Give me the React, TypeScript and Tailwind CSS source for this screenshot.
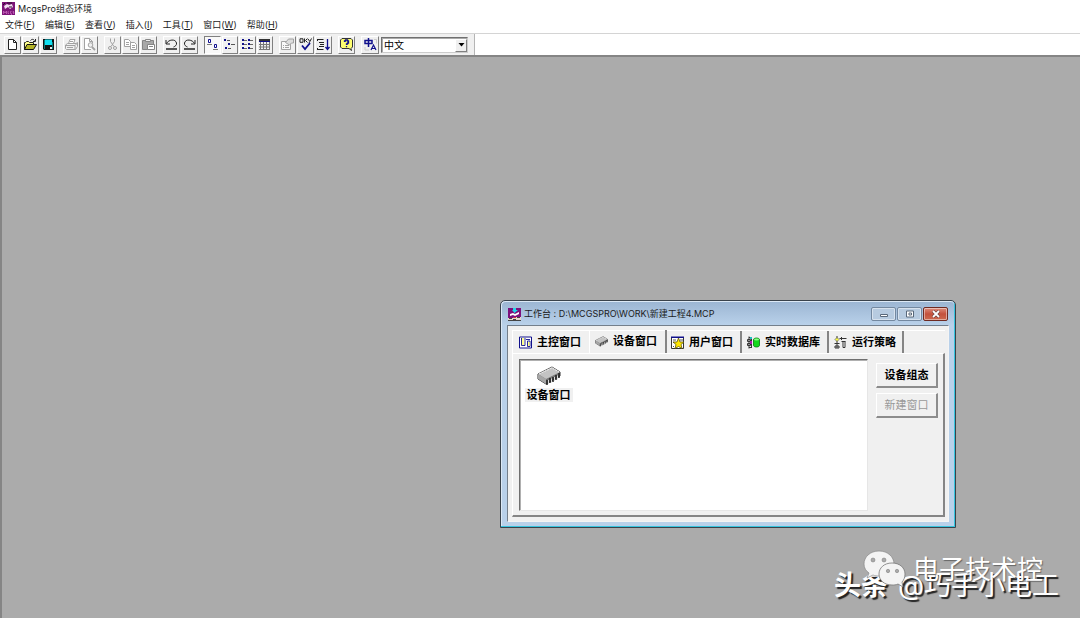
import React from "react";

type Kids = { children: React.ReactNode };

function Glyph({ children, className = "h-[13px] w-[13px]" }: Kids & { className?: string }) {
  return (
    <svg viewBox="0 0 13 13" className={`${className} shrink-0`} fill="none" aria-hidden="true">
      {children}
    </svg>
  );
}

const GRAY = "#a2a2a2";
const NAVY = "#10108c";

const NewIcon = (
  <Glyph>
    <path d="M2.500 1.500h5l3 3v7h-8z" fill="#fff" stroke="#222" />
    <path d="M7.500 1.500v3h3" stroke="#222" />
  </Glyph>
);
const OpenIcon = (
  <Glyph>
    <path d="M.5 11.500v-7h1l1-1h2l1 1h4v2" fill="#ffff8c" stroke="#222" />
    <path d="M.5 11.500l2.500-5h9.500l-3 5z" fill="#b4b428" stroke="#111" />
    <path d="M6.500 2.500c1-1.500 3-1.500 4 0M11.500 1v2.500H9" stroke="#222" />
  </Glyph>
);
const SaveIcon = (
  <Glyph>
    <path d="M1 1h11v11H2l-1-1z" fill="#111" />
    <path d="M2 2h1v9H2zM10 4h1v7h-1z" fill="#087878" />
    <path d="M3 1.500h7V7H3z" fill="#10dff0" />
    <path d="M8 9h2v2H8z" fill="#eee" />
  </Glyph>
);
const PrintIcon = (
  <Glyph>
    <path d="M3.500 5.500l1.500-4h5l-1.500 4" fill="#fff" stroke={GRAY} />
    <path d="M5 3.500h3M.5 7l2-1.500h8.500l1.500-1v4l-2 3h-9l-1-1zM.5 7.500h9.500l2.500-2.500M10 7.500v4M2 9.500h6" stroke={GRAY} />
  </Glyph>
);
const PreviewIcon = (
  <Glyph>
    <path d="M8 11.500H1.500V.5h5l3 3v2M6.500.5v3h3" fill="#fff" stroke={GRAY} />
    <circle cx="7.500" cy="7" r="2.300" fill="#eee" stroke={GRAY} />
    <path d="M9 9l3 3" stroke={GRAY} strokeWidth="1.800" />
  </Glyph>
);
const CutIcon = (
  <Glyph>
    <path d="M4.500.5v3l3.500 5M8.500.5v3l-3.500 5" stroke={GRAY} />
    <circle cx="4" cy="10" r="1.500" stroke={GRAY} />
    <circle cx="9" cy="10" r="1.500" stroke={GRAY} />
  </Glyph>
);
const CopyIcon = (
  <Glyph>
    <path d="M.5 1.500h4l2 2v5h-6zM2 4.500h3M2 6.500h3" fill="#fff" stroke={GRAY} />
    <path d="M6.500 4.500h4l2 2v5h-6zM8 7.500h3M8 9.500h3" fill="#fff" stroke={GRAY} />
  </Glyph>
);
const PasteIcon = (
  <Glyph>
    <path d="M.5 2.500h11v9H.5z" fill="#a8a8a8" stroke="#858585" />
    <path d="M3.500 1.500h5v2h-5z" fill="#eee" stroke="#888" />
    <path d="M5.500 6.500h7v5h-7zM7 8.500h4" fill="#fff" stroke="#858585" />
  </Glyph>
);
const UndoIcon = (
  <Glyph>
    <path d="M1 2v4h4M1.500 5.500C3.500 1.500 10.500.5 11.500 5c.5 2-1.500 3.500-3 4" stroke="#222" />
    <path d="M1 11h11" stroke="#222" strokeWidth="1.500" />
  </Glyph>
);
const RedoIcon = (
  <Glyph>
    <path d="M12 2v4H8M11.500 5.500C9.500 1.500 2.500.5 1.500 5c-.5 2 1.500 3.500 3 4" stroke="#222" />
    <path d="M1 11h11" stroke="#222" strokeWidth="1.500" />
  </Glyph>
);
const LargeIcon = (
  <Glyph>
    <path d="M2.500 1.500h2v3h-2zM8.500 6.500h2v3h-2z" fill="#fff" stroke={NAVY} />
    <path d="M1 6.500h5M7 11.500h5" stroke="#777" />
  </Glyph>
);
const SmallIcon = (
  <Glyph>
    <path d="M1 1h2v2H1zM5 5h2v2H5zM2 9h2v2H2z" fill={NAVY} />
    <path d="M4 2.500h3M8 6.500h4M5 10.500h3" stroke="#555" />
  </Glyph>
);
const ListIcon = (
  <Glyph>
    <path d="M1 1h2v2H1zM7 1h2v2H7zM1 5h2v2H1zM7 5h2v2H7zM1 9h2v2H1zM7 9h2v2H7z" fill={NAVY} />
    <path d="M3 2.500h3M9 2.500h3M3 6.500h3M9 6.500h3M3 10.500h3M9 10.500h3" stroke="#666" />
  </Glyph>
);
const DetailIcon = (
  <Glyph>
    <path d="M1 1h11v2H1z" fill="#333" />
    <path d="M1 3.500h11" stroke={NAVY} />
    <path d="M2.500 4v8M5.500 4v8M8.500 4v8M11.500 4v8M1 6.500h11M1 9h11M1 11.500h11" stroke="#777" />
  </Glyph>
);
const PropIcon = (
  <Glyph>
    <path d="M.5 3.500h9v8h-9zM2 7.500h1M4 7.500h4M2 9.500h1M4 9.500h4" fill="#f8f8f8" stroke={GRAY} />
    <path d="M4.500 4.500l3-3.500h5v4h-2l-2 2z" fill="#ddd" stroke={GRAY} />
  </Glyph>
);
const CheckIcon = (
  <Glyph>
    <path d="M1 .8h3v3.500H1zM5.500.5v4M8.500.5l-2 2 2 2M9 1l1.500 2M10 5l2.500-4.500" stroke="#222" />
    <path d="M3 7.500l3 3.500 5-6" stroke={NAVY} strokeWidth="1.800" />
  </Glyph>
);
const SortIcon = (
  <Glyph>
    <path d="M.5 1.500h6M2 4.500h5M3 6.500h4M2 8.500h5M.5 11.500h6M.5 1v2M.5 10v2" stroke="#222" />
    <path d="M10.500 1v10M8.500 9l2 2.500 2-2.500" stroke={NAVY} strokeWidth="1.300" />
  </Glyph>
);
const HelpIcon = (
  <Glyph>
    <path d="M2 .5h9l1.500 1.500v7L11 10.500l.5 2-2.500-2H2L.5 9V2z" fill="#ffff70" stroke="#333" />
    <path d="M4.500 4V3h1V2h2v1h1v2h-1v1h-1v1M6.500 8v1.300" stroke={NAVY} strokeWidth="1.300" />
  </Glyph>
);
const LangIcon = (
  <Glyph>
    <path d="M1 2.500h7v3H1zM4.500 0v9" stroke={NAVY} strokeWidth="1.500" />
    <path d="M10 1.500h2.500v4M1 9v3h4" stroke="#ccc" />
    <path d="M7 12l2.500-5 2.500 5M8 10.500h3" stroke={NAVY} strokeWidth="1.200" />
  </Glyph>
);

type Tool = { label: string; icon: React.ReactNode; off?: boolean; pressed?: boolean };
const groups: { width: string; tools: Tool[] }[] = [
  { width: "w-[53px]", tools: [{ label: "新建", icon: NewIcon }, { label: "打开", icon: OpenIcon }, { label: "保存", icon: SaveIcon }] },
  { width: "w-[35px]", tools: [{ label: "打印", icon: PrintIcon, off: true }, { label: "打印预览", icon: PreviewIcon, off: true }] },
  { width: "w-[53px]", tools: [{ label: "剪切", icon: CutIcon, off: true }, { label: "复制", icon: CopyIcon, off: true }, { label: "粘贴", icon: PasteIcon, off: true }] },
  { width: "w-[35px]", tools: [{ label: "撤销", icon: UndoIcon }, { label: "重做", icon: RedoIcon }] },
  { width: "w-[69px]", tools: [{ label: "大图标", icon: LargeIcon, pressed: true }, { label: "小图标", icon: SmallIcon }, { label: "列表", icon: ListIcon }, { label: "详细资料", icon: DetailIcon }] },
  { width: "w-[53px]", tools: [{ label: "属性", icon: PropIcon, off: true }, { label: "检查", icon: CheckIcon }, { label: "排序", icon: SortIcon }] },
  { width: "w-[17px]", tools: [{ label: "帮助", icon: HelpIcon }] },
  { width: "w-[18px]", tools: [{ label: "语言", icon: LangIcon }] },
];

const menus = [
  ["文件", "F"],
  ["编辑", "E"],
  ["查看", "V"],
  ["插入", "I"],
  ["工具", "T"],
  ["窗口", "W"],
  ["帮助", "H"],
];

function AppLogo() {
  return (
    <Glyph>
      <path d="M0 0h13v13H0z" fill="#7c1478" />
      <path d="M2 4l3-2 2 1 3-1 1 3-3 2-2-2-3 2z" fill="#f2dff0" />
      <path d="M1 3l2-2M5 1h5M7 5h3" stroke="#2a0a2c" />
      <path d="M1.500 12V9l1.500 2 1.500-2v3M6.500 9.500H6v2h1M9.500 9.500h-1v2h1V13M12 9.500h-1v1h1v1h-1" stroke="#c766bd" strokeWidth=".8" />
    </Glyph>
  );
}

function WorkbenchLogo() {
  return (
    <Glyph>
      <path d="M0 0h13v13H0z" fill="#7c107c" />
      <path d="M5 0h3v2h2L6.500 5 4 2h1z" fill="#20d8e8" />
      <path d="M2 6l3-1 2 1 4-2v2l-4 2-2-1-3 1z" fill="#fff" />
      <path d="M0 10h5l2-1h6v3H0z" fill="#e6d7ca" />
      <path d="M1 10.500h3M5 11.500h3M9 9.500h3M0 12.500h13" stroke="#444" />
      <path d="M6 9h2v1H6z" fill="#e03030" />
    </Glyph>
  );
}

function Chip({ className }: { className: string }) {
  return (
    <svg viewBox="0 0 24 20" className={className} fill="none" aria-hidden="true">
      <path d="M1 8L15 1l8 5v4L9 18l-8-5z" fill="#777" stroke="#333" />
      <path d="M1 8L15 1l8 5L9 13z" fill="#c3c3c3" />
      <path d="M1 8l8 5v5l-8-5z" fill="#a6a6a6" />
      <path d="M2 8l13-6 7 4" stroke="#eee" strokeDasharray="2 1" />
      <path d="M10 14v5M13 12v5M16 11v5M19 9v5M22 7v5" stroke="#222" strokeWidth="1.500" />
      <path d="M11.500 14v4M14.500 12.500v4M17.500 11v4M20.500 9.500v4" stroke="#ddd" />
    </svg>
  );
}

const MainTabIcon = (
  <Glyph>
    <path d="M.5 1h12v11H.5z" fill="#fff" stroke={NAVY} />
    <path d="M2 2h3v7H2z" fill="#ffff90" />
    <path d="M2.500 2v7.500h3.500v-7.500M7 3.500h4M8.500 5v5.500h2.500V5z" stroke={NAVY} strokeWidth=".9" />
    <path d="M9 6h1.500v4H9z" fill="#ffff80" />
  </Glyph>
);
const UserTabIcon = (
  <Glyph>
    <path d="M.5 1.500h12v11H.5z" fill="#fff" stroke="#333" />
    <path d="M0 .5h13V2H0z" fill={NAVY} />
    <path d="M2 4h3M9 4h3M2 6l1 1M2 10l1 1" stroke="#555" />
    <path d="M7.500 2L9 6h4l-3 2.500 1 4-3.500-2-3.500 2 1-4L2 6h4z" fill="#ffe600" stroke="#5c5610" strokeWidth=".8" />
  </Glyph>
);
const DataTabIcon = (
  <Glyph>
    <path d="M2 .5v12M.5 3.500h3v2h-3zM.5 7.500h3v2h-3zM4.500 2v9M2 1.500h3M2 11.500h3" stroke="#333" />
    <path d="M3 1h2v2H3z" fill="#20bcc0" />
    <path d="M3 5h2v3H3z" fill="#b018b0" />
    <path d="M6.500 3.500C7 1.500 12 1.500 12.500 3.500v6c-.5 2-5.500 2-6 0z" fill="#14d81c" stroke="#087012" strokeWidth=".8" />
    <ellipse cx="9.500" cy="3.500" rx="2.500" ry="1" fill="#88ff88" />
  </Glyph>
);
const StrategyTabIcon = (
  <Glyph>
    <path d="M3 0v12M.5 7.500h5M1 10h4v2H1zM5.500 2.500h7M7.500 1v3M7.500 5.500h4" stroke="#333" />
    <path d="M3 1.500l2 2-2 2-2-2z" fill="#ffff40" stroke="#666" strokeWidth=".8" />
    <path d="M9 5.500h2v6H9z" fill="#fff" stroke="#333" />
  </Glyph>
);

type Tab = { label: string; icon: React.ReactNode; box: string };
const tabs: Tab[] = [
  { label: "主控窗口", icon: MainTabIcon, box: "w-[77px] pl-1.5 gap-[5px] border-r border-white" },
  { label: "设备窗口", icon: <Chip className="h-[11px] w-[13px] shrink-0" />, box: "w-[77px] pl-[5px] gap-[5px] border-r-2 border-[#858585] -mt-px pb-px" },
  { label: "用户窗口", icon: UserTabIcon, box: "w-[75px] pl-1 gap-[5px] border-r-2 border-[#858585]" },
  { label: "实时数据库", icon: DataTabIcon, box: "w-[87px] pl-[5px] gap-[5px] border-r-2 border-[#858585]" },
  { label: "运行策略", icon: StrategyTabIcon, box: "w-[75px] pl-[5px] gap-[5px] border-r-2 border-[#858585]" },
];

const caption =
  "flex h-[14px] items-center justify-center rounded-[2px] border shadow-[inset_0_0_0_1px_rgba(255,255,255,0.45)]";

function Workbench() {
  return (
    <section
      aria-label="工作台"
      className="absolute left-[498px] top-[243px] w-[456px] rounded-t-[5px] border border-[#39424b] bg-[#b9d1ea] px-[6px] pb-[5px] shadow-[inset_-1px_-1px_0_#35c4de,inset_1px_1px_0_#dce9f6]"
    >
      <header className="-mx-[5px] mt-px flex h-[23px] items-center rounded-t-[4px] bg-gradient-to-b from-[#9cb6d3] to-[#b9d1ea] pl-[6px] pr-[6px] pt-px">
        <WorkbenchLogo />
        <h2 className="ml-[3px] flex-1 whitespace-nowrap text-[9px] leading-[14px] text-[#1c1c1c]">工作台 : D:\MCGSPRO\WORK\新建工程4.MCP</h2>
        <div className="flex gap-px">
          <button aria-label="最小化" className={`${caption} w-[25px] border-[#7388a0] bg-[#b7cbe0]`}>
            <svg viewBox="0 0 10 8" className="h-2 w-2.5" fill="none"><path d="M1.500 4.500h7v2h-7z" fill="#fff" stroke="#59687a" /></svg>
          </button>
          <button aria-label="最大化" className={`${caption} w-[25px] border-[#7388a0] bg-[#b7cbe0]`}>
            <svg viewBox="0 0 10 8" className="h-2 w-2.5" fill="none"><path d="M1.500 1h7v6h-7z" fill="#fff" stroke="#59687a" /><path d="M4 3h2.500v2H4z" stroke="#59687a" /></svg>
          </button>
          <button aria-label="关闭" className={`${caption} w-[25px] border-[#6e2a22] bg-gradient-to-b from-[#dc8c7c] via-[#c4503c] to-[#cc6a50]`}>
            <svg viewBox="0 0 10 8" className="h-2 w-2.5" fill="none"><path d="M2 1l6 6M8 1L2 7" stroke="#5a3a3a" strokeWidth="3" /><path d="M2 1l6 6M8 1L2 7" stroke="#fff" strokeWidth="1.800" /></svg>
          </button>
        </div>
      </header>

      <div className="border border-b-[#f4f4f4] border-l-[#747f8b] border-r-[#f4f4f4] border-t-[#747f8b] bg-[#f0f0f0] pb-1 pl-1 pr-[3px] pt-1">
        <div role="tablist" className="flex h-[23px] border-l border-t border-white">
          {tabs.map((t, i) => (
            <button
              key={t.label}
              role="tab"
              aria-selected={i === 1}
              className={`flex items-center whitespace-nowrap text-[11px] font-bold leading-[14px] text-black ${t.box}`}
            >
              {t.icon}
              <span>{t.label}</span>
            </button>
          ))}
        </div>
        <div role="tabpanel" className="flex gap-2 border-b-2 border-l border-r-2 border-t border-b-[#858585] border-l-white border-r-[#858585] border-t-white pb-1 pl-1.5 pr-[5px] pt-[5px]">
          <div className="h-[152px] flex-1 border border-b-[#e6e6e6] border-l-[#6f6f6f] border-r-[#e6e6e6] border-t-[#6f6f6f] bg-white px-[5px] py-1.5 shadow-[inset_1px_1px_0_#b0b0b0]">
            <button className="flex w-[47px] flex-col items-center whitespace-nowrap text-[11px] font-bold leading-[14px] text-black">
              <Chip className="h-5 w-6" />
              <span className="mt-0.5 bg-[#f0f0f0] px-0.5">设备窗口</span>
            </button>
          </div>
          <div className="flex w-[62px] flex-col gap-[5px] pt-1">
            {["设备组态", "新建窗口"].map((label, i) => (
              <button
                key={label}
                disabled={i === 1}
                className="h-[25px] whitespace-nowrap border border-b-2 border-r-2 border-b-[#8c8c8c] border-l-white border-r-[#8c8c8c] border-t-white bg-[#f0f0f0] text-[11px] font-bold leading-[14px] text-black disabled:font-normal disabled:text-[#999]"
              >
                {label}
              </button>
            ))}
          </div>
        </div>
      </div>
    </section>
  );
}

function Watermark() {
  return (
    <div className="absolute bottom-1 right-2 h-[64px] w-[240px] text-white">
      <p className="absolute left-0.5 top-4 flex items-center whitespace-nowrap text-[27px] leading-[40px] [text-shadow:2px_2px_1px_#222]">
        <span className="font-bold">头条</span>
        <span className="ml-2.5">@巧手小电工</span>
      </p>
      <svg viewBox="0 0 44 38" className="absolute left-[31px] top-0 h-[38px] w-[44px]" aria-hidden="true">
        <path d="M16 1C7 1 1 7 1 14c0 4 2 7 5 9l-2 5 6-3c2 1 4 1 6 1 9 0 15-5 15-12S25 1 16 1z" fill="#f4f4f4" stroke="#888" strokeWidth=".7" />
        <path d="M29 13c-8 0-13 5-13 11s5 11 13 11c2 0 4 0 6-1l5 3-1-5c2-2 3-5 3-8 0-6-5-11-13-11z" fill="#f4f4f4" stroke="#777" strokeWidth=".8" />
        <g fill="#aaa" stroke="#777" strokeWidth=".5">
          <circle cx="10" cy="10" r="2" />
          <circle cx="21" cy="10" r="2" />
          <circle cx="25" cy="21" r="1.700" />
          <circle cx="34" cy="21" r="1.700" />
        </g>
      </svg>
      <p className="absolute left-[81px] top-0 whitespace-nowrap text-[26px] leading-[40px] [text-shadow:1px_1px_1px_#666]">电子技术控</p>
    </div>
  );
}

export default function App() {
  return (
    <div className="flex min-h-screen flex-col bg-white font-[Inter,'Noto_Sans_CJK_SC',sans-serif] text-[#1c1c1c]">
      <header className="flex h-[17px] items-center gap-[3px] pl-0.5">
        <AppLogo />
        <h1 className="text-[9px] leading-[14px]">McgsPro组态环境</h1>
      </header>
      <nav className="flex h-4 items-center gap-2.5 pl-[5px]">
        {menus.map(([name, key]) => (
          <button key={key} className="whitespace-nowrap text-[9px] leading-[14px]">
            {name}(<u>{key}</u>)
          </button>
        ))}
      </nav>
      <div className="flex h-[22px] border-t border-[#d4d4d4]">
        <div role="toolbar" className="flex items-center gap-1.5 border-r border-[#b5b5b5] bg-[#f0f0f0] pl-1 pr-1.5">
          {groups.map((g, i) => (
            <div key={i} className={`flex gap-px ${g.width}`}>
              {g.tools.map((t) => (
                <button
                  key={t.label}
                  aria-label={t.label}
                  aria-pressed={t.pressed}
                  disabled={t.off}
                  className="flex h-[18px] min-w-0 flex-1 items-center justify-center border border-b-[#808080] border-l-white border-r-[#808080] border-t-white bg-[#f0f0f0] aria-pressed:border-b-white aria-pressed:border-l-[#808080] aria-pressed:border-r-white aria-pressed:border-t-[#808080] aria-pressed:bg-[#f8f8f8]"
                >
                  {t.icon}
                </button>
              ))}
            </div>
          ))}
          <div className="relative -ml-1 h-4 w-[87px]">
            <select
              aria-label="界面语言"
              defaultValue="中文"
              className="block h-4 w-full appearance-none border border-b-[#ccc] border-l-[#707070] border-r-[#ccc] border-t-[#707070] bg-white pl-0.5 text-[10px] leading-[14px] text-black shadow-[inset_1px_1px_0_#aaa]"
            >
              <option>中文</option>
            </select>
            <span className="pointer-events-none absolute right-px top-0.5 flex h-[13px] w-3 items-center justify-center border border-b-[#808080] border-l-white border-r-[#808080] border-t-white bg-[#f0f0f0]">
              <svg viewBox="0 0 7 4" className="h-1 w-[7px]" aria-hidden="true"><path d="M.5 0h6L3.500 3.500z" fill="#000" /></svg>
            </span>
          </div>
        </div>
      </div>
      <main className="relative flex-1 overflow-hidden border-l-2 border-t-2 border-[#858585] bg-[#ababab]">
        <Workbench />
        <Watermark />
      </main>
    </div>
  );
}
